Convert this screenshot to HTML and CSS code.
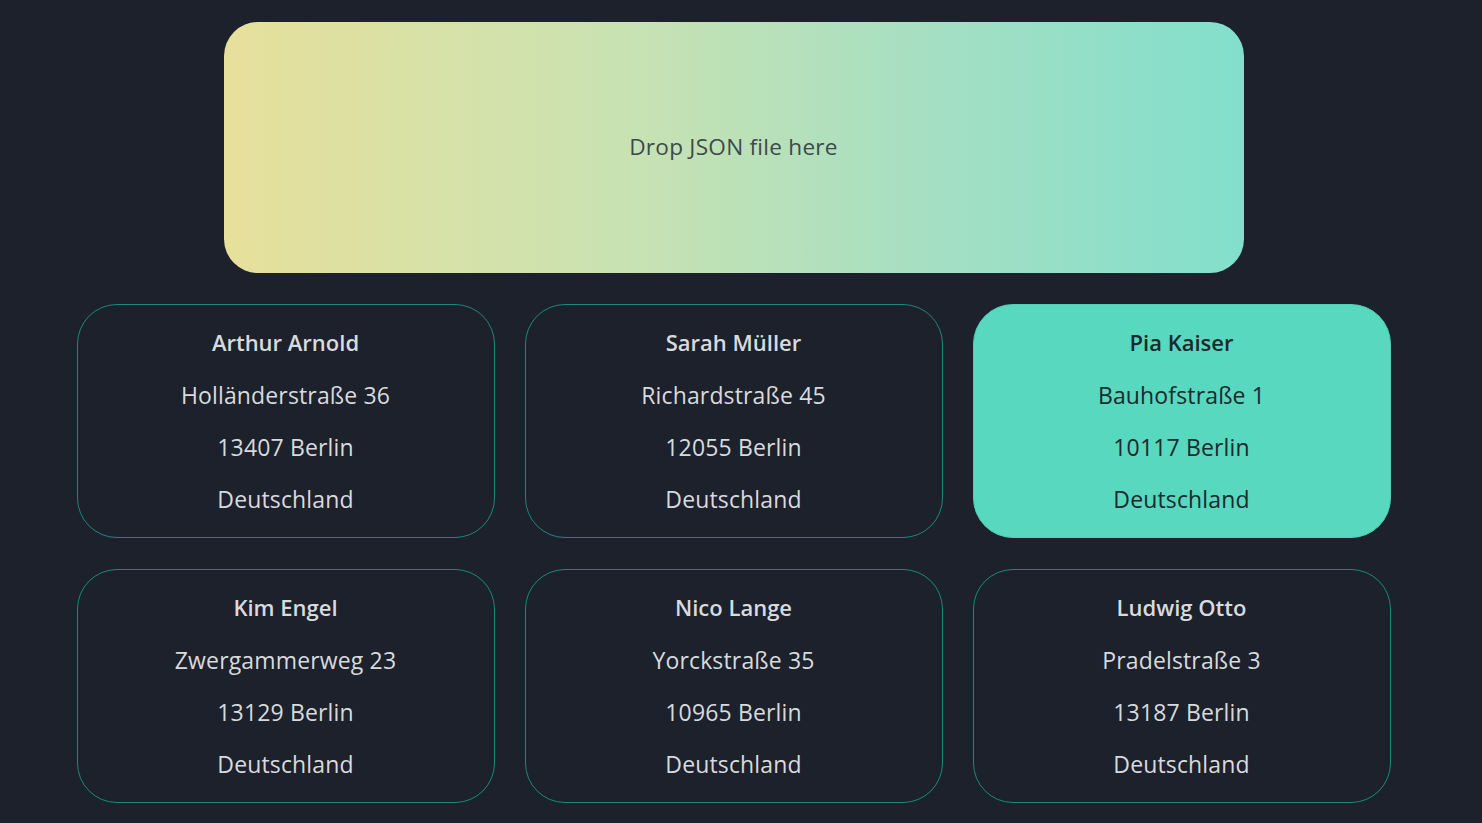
FILE: index.html
```html
<!DOCTYPE html>
<html lang="de">
<head>
<meta charset="utf-8">
<title>Adressen</title>
<link rel="stylesheet" href="styles.css">
</head>
<body>
<main class="page">
  <div class="dropzone">Drop JSON file here</div>
  <section class="cards">
    <div class="card"><p class="name">Arthur Arnold</p><p>Holländerstraße 36</p><p>13407 Berlin</p><p>Deutschland</p></div>
    <div class="card"><p class="name">Sarah Müller</p><p>Richardstraße 45</p><p>12055 Berlin</p><p>Deutschland</p></div>
    <div class="card active"><p class="name">Pia Kaiser</p><p>Bauhofstraße 1</p><p>10117 Berlin</p><p>Deutschland</p></div>
    <div class="card"><p class="name">Kim Engel</p><p>Zwergammerweg 23</p><p>13129 Berlin</p><p>Deutschland</p></div>
    <div class="card"><p class="name">Nico Lange</p><p>Yorckstraße 35</p><p>10965 Berlin</p><p>Deutschland</p></div>
    <div class="card"><p class="name">Ludwig Otto</p><p>Pradelstraße 3</p><p>13187 Berlin</p><p>Deutschland</p></div>
  </section>
</main>
</body>
</html>
```
FILE: styles.css
```css
html, body {
  margin: 0;
  padding: 0;
  background: #1c212b;
  height: 100%;
  overflow: hidden;
}
body {
  font-family: "Open Sans", "Noto Sans", sans-serif;
  color: #d8dadd;
}
.page {
  width: 1467px;
  padding-top: 22px;
  display: flex;
  flex-direction: column;
  align-items: center;
  gap: 31px;
}
.dropzone {
  box-sizing: border-box;
  width: 1020px;
  height: 251px;
  padding-bottom: 2px;
  border-radius: 34px;
  background: linear-gradient(to right, #e7e09b 0%, #c8e2b2 40%, #a2dfc4 72%, #82dfcc 100%);
  display: flex;
  align-items: center;
  justify-content: center;
  color: #3d4a4c;
  font-size: 22.6px;
  letter-spacing: 0.25px;
}
.cards {
  display: grid;
  grid-template-columns: repeat(3, 418px);
  column-gap: 30px;
  row-gap: 31px;
}
.card {
  box-sizing: border-box;
  height: 234px;
  border: 1px solid #1a8a80;
  border-radius: 40px;
  display: flex;
  flex-direction: column;
  align-items: center;
  padding-top: 21px;
  gap: 20px;
}
.card p {
  margin: 0;
  font-size: 23px;
  line-height: 32px;
  height: 32px;
  letter-spacing: 0.15px;
}
.card .name {
  font-weight: 600;
  font-size: 22px;
  letter-spacing: 0;
  margin-bottom: 1px;
}
.card.active {
  background: #57d8bf;
  border-color: #4ecfb6;
  color: #1c2a2d;
}
```
